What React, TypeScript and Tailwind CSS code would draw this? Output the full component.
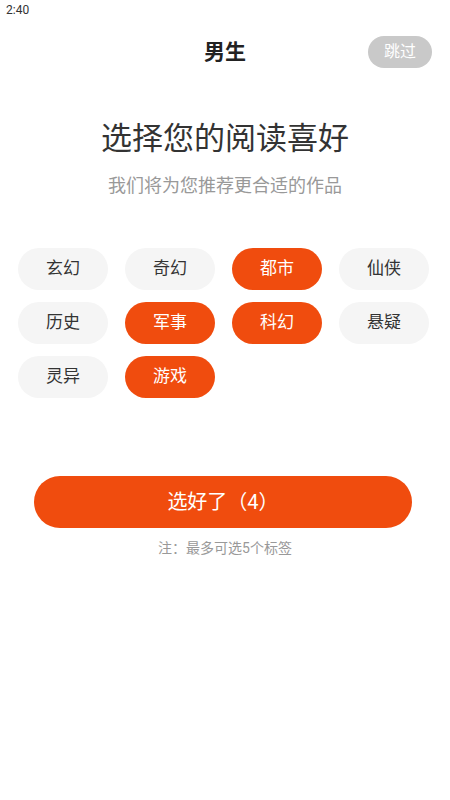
import React from "react";

const tags = [
  { name: "玄幻", on: false },
  { name: "奇幻", on: false },
  { name: "都市", on: true },
  { name: "仙侠", on: false },
  { name: "历史", on: false },
  { name: "军事", on: true },
  { name: "科幻", on: true },
  { name: "悬疑", on: false },
  { name: "灵异", on: false },
  { name: "游戏", on: true },
];

export default function App() {
  return (
    <div
      className="w-[450px] h-[800px] bg-white flex flex-col"
      style={{ fontFamily: '"Roboto", "Noto Sans CJK SC", sans-serif' }}
    >
      <div className="h-[20px] pl-[6px] pt-[1px] text-[12px] leading-[18px] text-[#333]">2:40</div>
      <div className="relative h-[66px] flex items-center justify-center">
        <span className="text-[21px] font-bold text-[#222]">男生</span>
        <div className="absolute right-[18px] top-[16px] w-[64px] h-[32px] rounded-full bg-[#c9c9c9] text-white text-[16px] flex items-center justify-center">
          跳过
        </div>
      </div>
      <div className="mt-[33px] text-center text-[31px] leading-[40px] text-[#333]">选择您的阅读喜好</div>
      <div className="mt-[15px] text-center text-[18px] leading-[24px] text-[#999]">我们将为您推荐更合适的作品</div>
      <div className="mt-[50px] pl-[18px] grid grid-cols-[repeat(4,90px)] gap-x-[17px] gap-y-[12px]">
        {tags.map((t) => (
          <div
            key={t.name}
            className={
              t.on
                ? "h-[42px] rounded-full bg-[#f04c0e] text-white text-[17px] flex items-center justify-center"
                : "h-[42px] rounded-full bg-[#f5f5f5] text-[#333] text-[17px] flex items-center justify-center"
            }
          >
            {t.name}
          </div>
        ))}
      </div>
      <div className="mt-[78px] mx-[34px] w-[378px] h-[52px] rounded-full bg-[#f04c0e] text-white text-[20px] flex items-center justify-center">
        选好了（4）
      </div>
      <div className="mt-[10px] text-center text-[14px] leading-[20px] text-[#999]">注：最多可选5个标签</div>
    </div>
  );
}
